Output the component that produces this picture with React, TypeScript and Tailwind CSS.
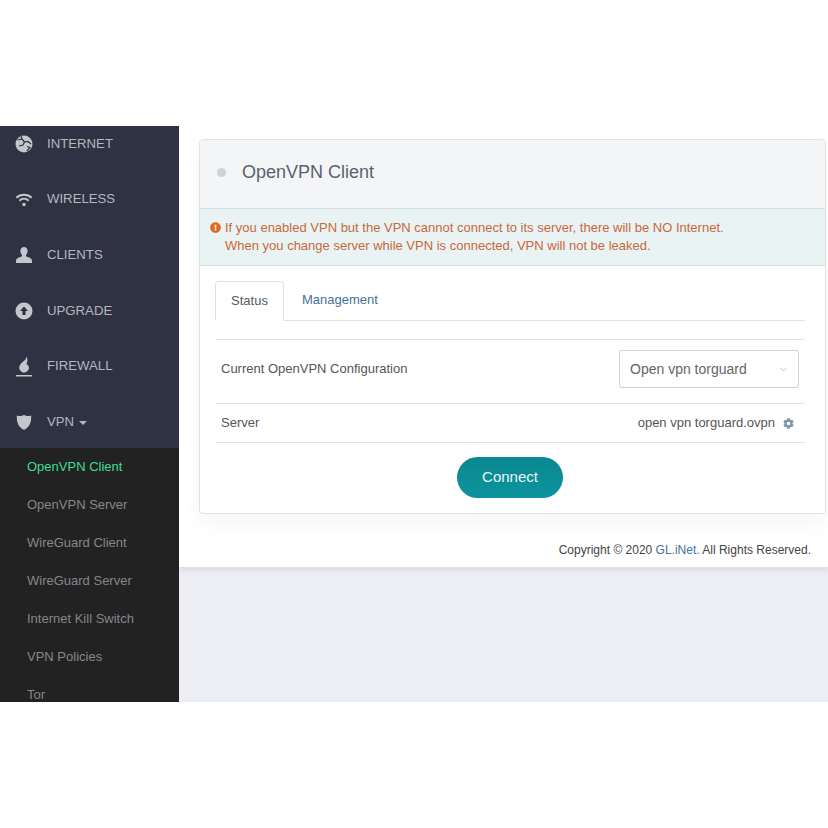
import { FaCog, FaExclamationCircle } from "react-icons/fa";
import { ChevronDown } from "lucide-react";
import type { ReactNode } from "react";

function IconoGlobo() {
  return (
    <svg viewBox="0 0 18 18" className="h-[18px] w-[18px]">
      <circle cx="9" cy="9" r="8.500" fill="#c3c6cc" />
      <path
        d="M2.500 5 7 4 9.500 7 13 6.500 16 9M7 4 6 1M9.500 7 8 10 4 11M12 11.500 15 12.500 12 16"
        fill="none"
        stroke="#2f3242"
        strokeWidth="1.200"
      />
    </svg>
  );
}

function IconoWifi() {
  return (
    <svg viewBox="0 0 20 16" className="h-[15px] w-[19px]" fill="none" stroke="#c3c6cc" strokeWidth="2.200">
      <path d="M1.500 6C6 1.700 14 1.700 18.500 6" />
      <path d="M4.800 9.300c3-2.700 7.400-2.700 10.400 0" />
      <circle cx="10" cy="13.500" r="1.900" fill="#c3c6cc" stroke="none" />
    </svg>
  );
}

function IconoCliente() {
  return (
    <svg viewBox="0 0 16 16" className="h-[16px] w-[16px]" fill="#c3c6cc">
      <path d="M8 0c2.300 0 3.600 1.800 3.600 4 0 1.700-.7 3.100-1.600 4v1.300c2 .8 5.300 1.700 5.800 3.500.2.800.2 2 .2 3.200H0c0-1.200 0-2.400.2-3.200.5-1.800 3.800-2.700 5.800-3.500V8C5.100 7.100 4.400 5.700 4.400 4 4.400 1.800 5.700 0 8 0z" />
    </svg>
  );
}

function IconoUpgrade() {
  return (
    <svg viewBox="0 0 18 18" className="h-[18px] w-[18px]">
      <circle cx="9" cy="9" r="8.500" fill="#c3c6cc" />
      <path d="M9 4.500 13 9H10.500V13H7.500V9H5z" fill="#2f3242" />
    </svg>
  );
}

function IconoFirewall() {
  return (
    <svg viewBox="0 0 16 21" className="h-[21px] w-[16px]" fill="#c3c6cc">
      <path d="M10.500 0c.6 3-2.500 4.500-4.800 6.800C3.800 8.800 2.800 10.800 3.400 13c.5 1.700 2.400 3.200 4.600 3.700 2.800-.6 5-2.400 5-5 0-1.500-.9-2.700-2.600-3.700C11.800 6 11.800 2.700 10.500 0z" />
      <rect x="0" y="19" width="16" height="1.500" />
    </svg>
  );
}

function IconoEscudo() {
  return (
    <svg viewBox="0 0 16 16" className="h-[16px] w-[16px]" fill="#c3c6cc">
      <path d="M.800 1.500C3.500 2.300 5.800 2.300 8 1c2.200 1.300 4.500 1.300 7.200.5.300 6.500-1.500 11.800-7.200 14.500C2.300 13.300.500 8 .800 1.500z" />
    </svg>
  );
}

const menu: { nome: string; icone: ReactNode; seta?: boolean }[] = [
  { nome: "INTERNET", icone: <IconoGlobo /> },
  { nome: "WIRELESS", icone: <IconoWifi /> },
  { nome: "CLIENTS", icone: <IconoCliente /> },
  { nome: "UPGRADE", icone: <IconoUpgrade /> },
  { nome: "FIREWALL", icone: <IconoFirewall /> },
  { nome: "VPN", icone: <IconoEscudo />, seta: true },
];

const submenu = [
  "OpenVPN Client",
  "OpenVPN Server",
  "WireGuard Client",
  "WireGuard Server",
  "Internet Kill Switch",
  "VPN Policies",
  "Tor",
];

function Sidebar() {
  return (
    <aside className="flex h-[576px] w-[179px] shrink-0 flex-col overflow-hidden bg-[#222222]">
      <div className="-mt-[10px] h-[332px] shrink-0 bg-[#2f3242]">
        {menu.map((item) => (
          <div key={item.nome} className="flex h-[55.600px] items-center">
            <span className="flex w-[47px] shrink-0 justify-center pl-[1px]">
              <span className="flex w-[18px] justify-center">{item.icone}</span>
            </span>
            <span className="text-[13.200px] text-[#b4b7bf]">{item.nome}</span>
            {item.seta && (
              <span className="ml-[5px] mt-[2px] h-0 w-0 border-x-[4px] border-t-[4px] border-x-transparent border-t-[#b4b7bf]" />
            )}
          </div>
        ))}
      </div>
      <div>
        {submenu.map((nome, i) => (
          <div
            key={nome}
            className={
              i === 0
                ? "flex h-[38px] items-center pl-[27px] text-[13px] font-medium text-[#3ddc97]"
                : "flex h-[38px] items-center pl-[27px] text-[13px] text-[#85878b]"
            }
          >
            {nome}
          </div>
        ))}
      </div>
    </aside>
  );
}

function Card() {
  return (
    <div className="overflow-hidden rounded-[4px] border border-[#e0e3e6] bg-white shadow-[0_10px_20px_rgba(0,0,0,0.04)]">
      <div className="flex h-[69px] items-center border-b border-[#d5e0e2] bg-[#f3f5f6] pb-[4px] pl-[17px]">
        <span className="h-[9px] w-[9px] rounded-full bg-[#cfd2d6]" />
        <h2 className="ml-[16px] text-[18px] text-[#5a6170]">OpenVPN Client</h2>
      </div>
      <div className="flex h-[57px] border-b border-[#d5e0e2] bg-[#e9f3f4] pl-[10px] pt-[10px] text-[13px] leading-[18px] text-[#c8693b]">
        <FaExclamationCircle size={11} className="mr-[4px] mt-[3px] shrink-0 text-[#dd6b20]" />
        <p>
          If you enabled VPN but the VPN cannot connect to its server, there will be NO Internet.
          <br />
          When you change server while VPN is connected, VPN will not be leaked.
        </p>
      </div>
      <div className="px-[16px] pb-[15px] pt-[15px]">
        <div className="mr-[4px] flex h-[40px] items-end border-b border-[#dfe1e3] text-[13px]">
          <div className="-mb-[1px] -ml-[1px] flex h-[40px] w-[69px] items-center justify-center rounded-t-[4px] border border-[#dfe1e3] border-b-white bg-white pb-[1px] text-[#555b61]">
            Status
          </div>
          <div className="flex h-[40px] items-center pl-[18px] text-[#46719b]">Management</div>
        </div>
        <div className="mr-[4px] mt-[18px] flex h-[65px] items-start justify-between border-y border-[#dfe1e3] pl-[5px] pr-[6px]">
          <span className="mt-[19px] text-[13px] text-[#555555]">Current OpenVPN Configuration</span>
          <div className="mt-[10px] flex h-[38px] w-[180px] items-center justify-between rounded-[3px] border border-[#cfd2d5] pl-[10px] pr-[9px] text-[14px] text-[#666666]">
            Open vpn torguard
            <ChevronDown size={11} className="text-[#b9bcc0]" />
          </div>
        </div>
        <div className="mr-[4px] flex h-[39px] items-center justify-between border-b border-[#dfe1e3] pl-[5px] pr-[11px] text-[13px] text-[#555555]">
          <span>Server</span>
          <span className="flex items-center gap-[8px]">
            open vpn torguard.ovpn
            <FaCog size={11} className="text-[#7f97a8]" />
          </span>
        </div>
        <div className="mr-[4px] mt-[14px] flex justify-center">
          <button
            type="button"
            className="-ml-[1px] h-[41px] w-[106px] rounded-full bg-gradient-to-b from-[#0b8791] to-[#0d949c] text-[15px] text-[#e6f8f8]"
          >
            Connect
          </button>
        </div>
      </div>
    </div>
  );
}

export default function App() {
  return (
    <div className="flex h-[828px] flex-col bg-white font-['Liberation_Sans',Arial,sans-serif]">
      <div className="h-[126px] shrink-0" />
      <div className="flex h-[576px] bg-[#eceef3]">
        <Sidebar />
        <main className="h-[441px] flex-1 bg-white pl-[20px] pr-[2px] pt-[13px] shadow-[0_3px_5px_rgba(0,0,0,0.08)]">
          <Card />
          <p className="mt-[27px] pr-[15px] text-right text-[12px] text-[#444444]">
            Copyright © 2020 <span className="text-[#46719b]">GL.iNet.</span> All Rights Reserved.
          </p>
        </main>
      </div>
    </div>
  );
}
